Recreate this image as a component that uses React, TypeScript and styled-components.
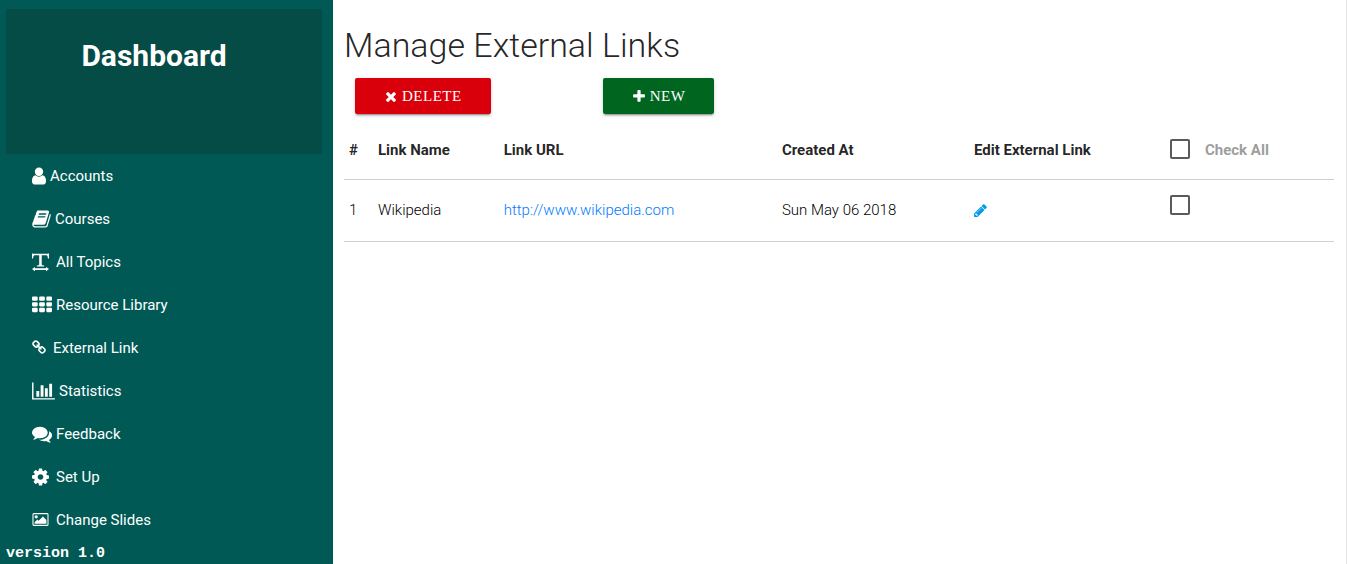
import React from "react";
import styled, { createGlobalStyle } from "styled-components";

const GlobalStyle = createGlobalStyle`
  *, *::before, *::after { box-sizing: border-box; }
  body {
    margin: 0;
    background: #fff;
    color: rgba(0, 0, 0, 0.87);
    font-family: Roboto, "Liberation Sans", sans-serif;
    font-size: 15px;
    line-height: 22px;
  }
`;

const Page = styled.div`
  display: flex;
  min-height: 100vh;
  padding-right: 1px;
`;

const Sidebar = styled.aside`
  display: flex;
  flex-direction: column;
  flex: 0 0 333px;
  padding: 9px 11px 0 6px;
  background: #005955;
  color: #fff;
`;

const Profile = styled.div`
  height: 145px;
  padding: 27px 20px 0 0;
  background: #054b46;
  text-align: center;
`;

const Brand = styled.h2`
  margin: 0;
  font-size: 30px;
  font-weight: 700;
  line-height: 40px;
`;

const Menu = styled.ul`
  margin: 0;
  padding: 0 0 0 26px;
  list-style: none;
`;

const MenuLink = styled.a<{ $gap: number }>`
  display: flex;
  align-items: center;
  gap: ${(p) => p.$gap}px;
  height: 43px;
  color: #fff;
  text-decoration: none;
`;

const Version = styled.small`
  font: bold 15px/26px "Liberation Mono", monospace;
`;

const Main = styled.main`
  flex: 1;
  min-width: 0;
  padding: 24px 12px 0 11px;
  border-right: 1px solid #e4e4e4;
`;

const Title = styled.h1`
  margin: 0 0 12px;
  font-size: 34px;
  font-weight: 300;
  line-height: 42px;
`;

const Actions = styled.div`
  display: flex;
  gap: 112px;
  padding-left: 11px;
  margin-bottom: 8px;
`;

const ActionButton = styled.button<{ $color: string }>`
  display: flex;
  align-items: center;
  gap: 5px;
  height: 36px;
  padding: 0 29px 0 30px;
  border: 0;
  border-radius: 2px;
  background: ${(p) => p.$color};
  box-shadow: 0 2px 2px 0 rgba(0, 0, 0, 0.14), 0 1px 5px 0 rgba(0, 0, 0, 0.12),
    0 3px 1px -2px rgba(0, 0, 0, 0.2);
  color: #fff;
  font: 15px/36px "Liberation Serif", serif;
  letter-spacing: 0.5px;
  text-transform: uppercase;
  cursor: pointer;
`;

const Table = styled.table`
  width: 100%;
  table-layout: fixed;
  border-collapse: collapse;
`;

const Column = styled.col<{ $width?: string }>`
  width: ${(p) => p.$width ?? "auto"};
`;

const Row = styled.tr<{ $height: number }>`
  height: ${(p) => p.$height}px;
  border-bottom: 1px solid #d0d0d0;
`;

const HeadCell = styled.th`
  padding: 0 5px;
  font-weight: 700;
  text-align: left;
`;

const Cell = styled.td`
  padding: 0 5px;
  color: #000;
  font-weight: 300;
`;

const UrlLink = styled.a`
  color: #007bff;
  text-decoration: none;
`;

const EditLink = styled.a`
  display: flex;
  color: #039be5;
`;

const CheckLabel = styled.label`
  display: flex;
  align-items: center;
  gap: 15px;
  color: #9e9e9e;
`;

const Checkbox = styled.input`
  appearance: none;
  display: block;
  width: 20px;
  height: 20px;
  margin: 0 0 3px;
  border: 2px solid #5a5a5a;
  border-radius: 2px;
  background: #fff;
  &:checked { background: #26a69a; }
`;

const RowCheckbox = styled(Checkbox)`
  margin-bottom: 10px;
`;

const Svg = styled.svg`
  flex: none;
  display: block;
  fill: currentColor;
`;

const icons = {
  user: { w: 1280, x: 256, d: "M1536 1399q0 109-62.5 187t-150.5 78h-854q-88 0-150.5-78t-62.5-187q0-85 8.5-160.5t31.5-152 58.5-131 94-89 134.5-34.5q131 128 313 128t313-128q76 0 134.5 34.5t94 89 58.5 131 31.5 152 8.5 160.5zm-256-887q0 159-112.5 271.5t-271.5 112.5-271.5-112.5-112.5-271.5 112.5-271.5 271.5-112.5 271.5 112.5 112.5 271.5z" },
  book: { w: 1664, x: 64, d: "M1703 478q40 57 18 129l-275 906q-19 64-76.5 107.5t-122.5 43.5h-923q-77 0-148.5-53.5t-99.5-131.5q-24-67-2-127 0-4 3-27t4-37q1-8-3-21.5t-3-19.5q2-11 8-21t16.5-23.5 16.5-23.5q23-38 45-91.5t30-91.5q3-10 .5-30t-.5-28q3-11 17-28t17-23q21-36 42-92t25-90q1-9-2.5-32t.5-28q4-13 22-30.5t22-22.5q19-26 42.5-84.5t27.5-96.5q1-8-3-25.5t-2-26.5q2-8 9-18t18-23 17-21q8-12 16.5-30.5t15-35 16-36 19.5-32 26.5-23.5 36-11.5 47.5 5.5l-1 3q38-9 51-9h761q74 0 114 56t18 130l-274 906q-36 119-71.5 153.5t-128.5 34.5h-869q-27 0-38 15-11 16-1 43 24 70 144 70h923q29 0 56-15.5t35-41.5l300-987q7-22 5-57 38 15 59 43zm-1064 2q-4 13 2 22.5t20 9.5h608q13 0 25.5-9.5t16.5-22.5l21-64q4-13-2-22.5t-20-9.5h-608q-13 0-25.5 9.5t-16.5 22.5zm-83 256q-4 13 2 22.5t20 9.5h608q13 0 25.5-9.5t16.5-22.5l21-64q4-13-2-22.5t-20-9.5h-608q-13 0-25.5 9.5t-16.5 22.5z" },
  textWidth: { w: 1536, x: 0, d: "M0 128H80L120 150H1420L1460 128H1536V580H1440Q1410 290 1330 290H880V1120Q880 1200 1100 1220V1310H440V1220Q650 1200 650 1120V290H210Q130 290 90 580H0ZM0 1530 270 1340V1460H1266V1340L1536 1530 1266 1730V1610H270V1730Z" },
  th: { w: 1792, x: 0, d: [256, 768, 1280].flatMap((y) => [0, 640, 1280].map((x) => `M${x + 96} ${y - 128}h320q96 0 96 96v192q0 96-96 96h-320q-96 0-96-96v-192q0-96 96-96z`)).join("") },
  link: { w: 1664, x: 64, d: "M1520 1216q0-40-28-68l-208-208q-28-28-68-28-42 0-72 32 3 3 19 18.5t21.5 21.5 15 19 13 25.5 3.5 27.5q0 40-28 68t-68 28q-15 0-27.5-3.5t-25.5-13-19-15-21.5-21.5-18.5-19q-33 31-33 73 0 40 28 68l206 207q27 27 68 27 40 0 68-26l147-146q28-28 28-67zm-703-705q0-40-28-68l-206-207q-28-28-68-28-39 0-68 27l-147 146q-28 28-28 67 0 40 28 68l208 208q27 27 68 27 42 0 72-31-3-3-19-18.5t-21.5-21.5-15-19-13-25.5-3.5-27.5q0-40 28-68t68-28q15 0 27.5 3.5t25.5 13 19 15 21.5 21.5 18.5 19q33-31 33-73zm895 705q0 120-85 203l-147 146q-83 83-203 83-121 0-204-85l-206-207q-83-83-83-203 0-123 88-209l-88-88q-86 88-208 88-120 0-204-84l-208-208q-84-84-84-204t85-203l147-146q83-83 203-83 121 0 204 85l206 207q83 83 83 203 0 123-88 209l88 88q86-88 208-88 120 0 204 84l208 208q84 84 84 204z" },
  chart: { w: 2048, x: 0, d: "M640 896v512h-256v-512h256zm384-512v1024h-256v-1024h256zm1024 1152v128h-2048v-1536h128v1408h1920zm-640-896v768h-256v-768h256zm384-384v1152h-256v-1152h256z" },
  comments: { w: 1792, x: 0, d: "M1408 768q0 139-94 257t-256.5 186.5-353.5 68.5q-86 0-176-16-124 88-278 128-36 9-86 16h-3q-11 0-20.5-8t-11.5-21q-1-3-1-6.5t.5-6.5 2-6l2.5-5t3.5-5.5 4-5 4.5-5 4-4.5q5-6 23-25t26-29.5 22.5-29 25-38.5 20.5-44q-124-72-195-177t-71-224q0-139 94-257t256.5-186.5 353.5-68.5 353.5 68.5 256.5 186.5 94 257zm384 256q0 120-71 224.5t-195 176.5q10 24 20.5 44t25 38.5 22.5 29 26 29.5 23 25q1 1 4 4.5t4.5 5 4 5 3.5 5.5l2.5 5t2 6 .5 6.5-1 6.5q-3 14-13 22t-22 7q-50-7-86-16-154-40-278-128-90 16-176 16-271 0-472-132 58 4 88 4 161 0 309-45t264-129q125-92 192-212t67-254q0-77-23-152 129 71 204 178t75 230z" },
  cog: { w: 1536, x: 128, d: "M1152 896q0-106-75-181t-181-75-181 75-75 181 75 181 181 75 181-75 75-181zm512-109v222q0 12-8 23t-20 13l-185 28q-19 54-39 91 35 50 107 138 10 12 10 25t-9 23q-27 37-99 108t-94 71q-12 0-26-9l-138-108q-44 23-91 38-16 136-29 186-7 28-36 28h-222q-14 0-24.5-8.5t-11.5-21.5l-28-184q-49-16-90-37l-141 107q-10 9-25 9-14 0-25-11-126-114-165-168-7-10-7-23 0-12 8-23 15-21 51-66.5t54-70.5q-27-50-41-99l-183-27q-13-2-21-12.5t-8-23.5v-222q0-12 8-23t19-13l186-28q14-46 39-92-40-57-107-138-10-12-10-24 0-10 9-23 26-36 98.5-107.5t94.5-71.5q13 0 26 10l138 107q44-23 91-38 16-136 29-186 7-28 36-28h222q14 0 24.5 8.5t11.5 21.5l28 184q49 16 90 37l142-107q9-9 24-9 13 0 25 10 129 119 165 170 7 8 7 22 0 12-8 23-15 21-51 66.5t-54 70.5q26 50 41 98l183 28q13 2 21 12.5t8 23.5z" },
  image: { w: 1984, x: 32, d: "M704 576q0 80-56 136t-136 56-136-56-56-136 56-136 136-56 136 56 56 136zm1024 384v448h-1408v-192l320-320 160 160 512-512zm96-704h-1600q-13 0-22.5 9.5t-9.5 22.5v1216q0 13 9.5 22.5t22.5 9.5h1600q13 0 22.5-9.5t9.5-22.5v-1216q0-13-9.5-22.5t-22.5-9.5zm160 32v1216q0 66-47 113t-113 47h-1600q-66 0-113-47t-47-113v-1216q0-66 47-113t113-47h1600q66 0 113 47t47 113z" },
  times: { w: 1408, x: 192, d: "M1490 1322q0 40-28 68l-136 136q-28 28-68 28t-68-28l-294-294-294 294q-28 28-68 28t-68-28l-136-136q-28-28-28-68t28-68l294-294-294-294q-28-28-28-68t28-68l136-136q28-28 68-28t68 28l294 294 294-294q28-28 68-28t68 28l136 136q28 28 28 68t-28 68l-294 294 294 294q28 28 28 68z" },
  plus: { w: 1408, x: 192, d: "M1600 736v192q0 40-28 68t-68 28h-416v416q0 40-28 68t-68 28h-192q-40 0-68-28t-28-68v-416h-416q-40 0-68-28t-28-68v-192q0-40 28-68t68-28h416v-416q0-40 28-68t68-28h192q40 0 68 28t28 68v416h416q40 0 68 28t28 68z" },
  pencil: { w: 1536, x: 128, d: "M491 1536l91-91-235-235-91 91v107h128v128h107zm523-928q0-22-22-22-10 0-17 7l-542 542q-7 7-7 17 0 22 22 22 10 0 17-7l542-542q7-7 7-17zm-54-192l416 416-832 832h-416v-416zm683 96q0 53-37 90l-166 166-416-416 166-165q36-38 90-38 53 0 91 38l235 234q37 39 37 91z" },
};

type IconName = keyof typeof icons;

function Icon({ name, size }: { name: IconName; size: number }) {
  const { w, x, d } = icons[name];
  return (
    <Svg
      width={Math.round((w * size) / 1792)}
      height={size}
      viewBox={`${x} 0 ${w} 1792`}
      aria-hidden="true"
    >
      <path d={d} />
    </Svg>
  );
}

const menu: { icon: IconName; label: string; size: number; gap: number }[] = [
  { icon: "user", label: "Accounts", size: 20, gap: 4 },
  { icon: "book", label: "Courses", size: 20, gap: 4 },
  { icon: "textWidth", label: "All Topics", size: 20, gap: 7 },
  { icon: "th", label: "Resource Library", size: 20, gap: 4 },
  { icon: "link", label: "External Link", size: 15, gap: 7 },
  { icon: "chart", label: "Statistics", size: 20, gap: 4 },
  { icon: "comments", label: "Feedback", size: 20, gap: 4 },
  { icon: "cog", label: "Set Up", size: 20, gap: 7 },
  { icon: "image", label: "Change Slides", size: 15, gap: 7 },
];

const links = [
  { name: "Wikipedia", url: "http://www.wikipedia.com", created: "Sun May 06 2018" },
];

export default function App() {
  return (
    <Page>
      <GlobalStyle />
      <Sidebar>
        <Profile>
          <Brand>Dashboard</Brand>
        </Profile>
        <nav>
          <Menu>
            {menu.map((item) => (
              <li key={item.label}>
                <MenuLink href="#" $gap={item.gap}>
                  <Icon name={item.icon} size={item.size} />
                  {item.label}
                </MenuLink>
              </li>
            ))}
          </Menu>
        </nav>
        <Version>version 1.0</Version>
      </Sidebar>
      <Main>
        <Title>Manage External Links</Title>
        <Actions>
          <ActionButton type="button" $color="#d9000b">
            <Icon name="times" size={15} />
            Delete
          </ActionButton>
          <ActionButton type="button" $color="#00661f">
            <Icon name="plus" size={15} />
            New
          </ActionButton>
        </Actions>
        <Table>
          <colgroup>
            <Column $width="29px" />
            <Column $width="12.7%" />
            <Column $width="28.1%" />
            <Column $width="19.4%" />
            <Column $width="19.8%" />
            <Column />
          </colgroup>
          <thead>
            <Row $height={57}>
              <HeadCell scope="col">#</HeadCell>
              <HeadCell scope="col">Link Name</HeadCell>
              <HeadCell scope="col">Link URL</HeadCell>
              <HeadCell scope="col">Created At</HeadCell>
              <HeadCell scope="col">Edit External Link</HeadCell>
              <HeadCell scope="col">
                <CheckLabel>
                  <Checkbox type="checkbox" />
                  Check All
                </CheckLabel>
              </HeadCell>
            </Row>
          </thead>
          <tbody>
            {links.map((link, index) => (
              <Row key={link.url} $height={62}>
                <Cell>{index + 1}</Cell>
                <Cell>{link.name}</Cell>
                <Cell>
                  <UrlLink href={link.url}>{link.url}</UrlLink>
                </Cell>
                <Cell>{link.created}</Cell>
                <Cell>
                  <EditLink href="#" aria-label={`Edit ${link.name}`}>
                    <Icon name="pencil" size={15} />
                  </EditLink>
                </Cell>
                <Cell>
                  <RowCheckbox type="checkbox" aria-label={`Select ${link.name}`} />
                </Cell>
              </Row>
            ))}
          </tbody>
        </Table>
      </Main>
    </Page>
  );
}
